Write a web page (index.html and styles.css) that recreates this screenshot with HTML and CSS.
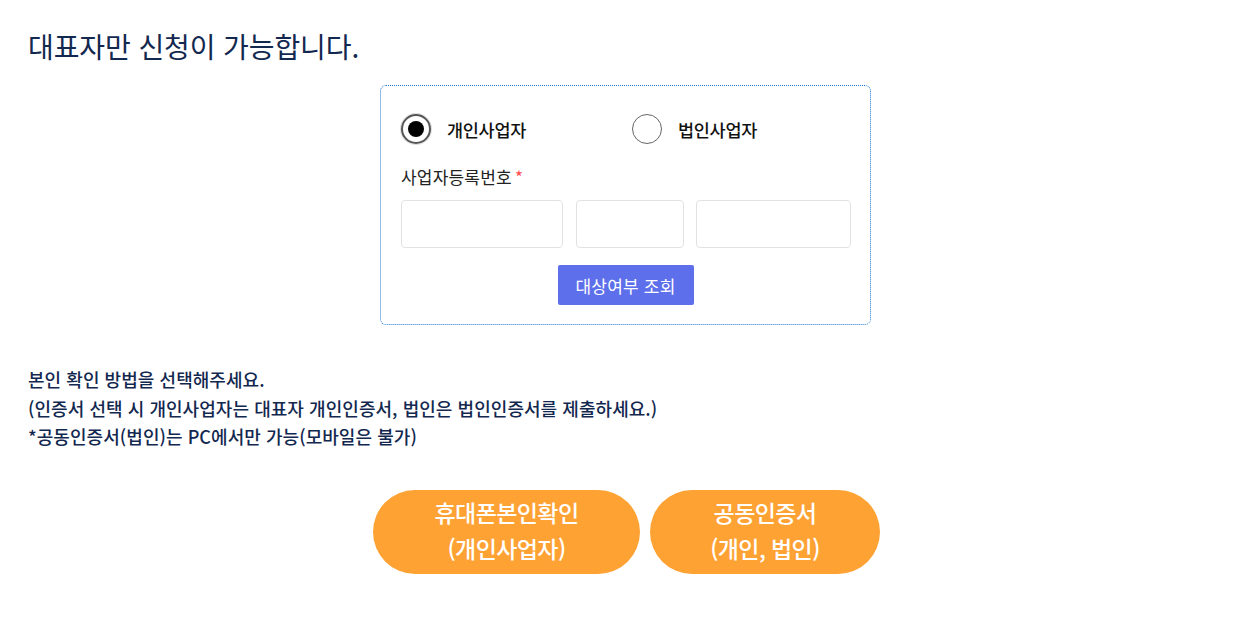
FILE: index.html
```html
<!DOCTYPE html>
<html lang="ko">
<head>
    <meta charset="UTF-8">
    <meta name="viewport" content="width=device-width, initial-scale=1.0">
    <title>대표자 신청</title>
    <link rel="stylesheet" href="styles.css">
</head>
<body>
    <h1 class="title">대표자만 신청이 가능합니다.</h1>

    <form class="check-box" onsubmit="return false">
        <div class="radio-row">
            <label class="radio-item">
                <input type="radio" name="bizType" value="personal" checked>
                <span class="radio-mark"></span>
                <span class="radio-text">개인사업자</span>
            </label>
            <label class="radio-item">
                <input type="radio" name="bizType" value="corp">
                <span class="radio-mark"></span>
                <span class="radio-text">법인사업자</span>
            </label>
        </div>

        <div class="field-label">사업자등록번호<span class="required">*</span></div>
        <div class="biz-inputs">
            <input type="text" class="biz-no first" maxlength="3">
            <input type="text" class="biz-no second" maxlength="2">
            <input type="text" class="biz-no third" maxlength="5">
        </div>

        <div class="btn-row">
            <button type="button" class="check-btn">대상여부 조회</button>
        </div>
    </form>

    <div class="notice">
        <p>본인 확인 방법을 선택해주세요.</p>
        <p>(인증서 선택 시 개인사업자는 대표자 개인인증서, 법인은 법인인증서를 제출하세요.)</p>
        <p>*공동인증서(법인)는 PC에서만 가능(모바일은 불가)</p>
    </div>

    <div class="auth-buttons">
        <button type="button" class="auth-btn phone">휴대폰본인확인<br>(개인사업자)</button>
        <button type="button" class="auth-btn cert">공동인증서<br>(개인, 법인)</button>
    </div>
</body>
</html>
```

FILE: styles.css
```css
* {
    box-sizing: border-box;
}
body {
    margin: 0;
    padding: 26px 28px 0;
    font-family: "Noto Sans CJK KR", "Noto Sans", sans-serif;
    background: #fff;
    color: #111;
}
.title {
    margin: 0;
    font-size: 28px;
    font-weight: 400;
    color: #13284f;
    letter-spacing: -0.1px;
    line-height: 40px;
}

.check-box {
    width: 491px;
    height: 240px;
    margin: 19px 0 0 352px;
    padding: 28px 20px 0 20px;
    border: 1px dotted #1f78d8;
    border-radius: 6px;
}
.radio-row {
    display: flex;
    align-items: center;
}
.radio-item {
    display: flex;
    align-items: center;
    width: 231px;
    flex-shrink: 0;
    cursor: pointer;
}
.radio-item input {
    display: none;
}
.radio-mark {
    width: 30px;
    height: 30px;
    border: 1px solid #666;
    border-radius: 50%;
    display: flex;
    align-items: center;
    justify-content: center;
    flex-shrink: 0;
}
.radio-item input:checked + .radio-mark {
    border: 2px solid #555;
    box-shadow: 0 0 0 1px #ddd;
}
.radio-item input:checked + .radio-mark::after {
    content: "";
    width: 16px;
    height: 16px;
    border-radius: 50%;
    background: #000;
}
.radio-text {
    margin-left: 16px;
    font-size: 17.5px;
    font-weight: 500;
    letter-spacing: -0.3px;
}

.field-label {
    margin-top: 21px;
    font-size: 17px;
    line-height: 24px;
    color: #222;
    letter-spacing: 0.2px;
}
.required {
    color: #ff4b4b;
    margin-left: 3px;
}
.biz-inputs {
    display: flex;
    margin-top: 11px;
}
.biz-no {
    height: 48px;
    border: 1px solid #e2e2e2;
    border-radius: 4px;
    font-size: 16px;
    padding: 0 10px;
}
.biz-no.first {
    width: 162px;
}
.biz-no.second {
    width: 108px;
    margin-left: 13px;
}
.biz-no.third {
    width: 155px;
    margin-left: 12px;
}
.btn-row {
    display: flex;
    justify-content: center;
    margin-top: 17px;
}
.check-btn {
    width: 136px;
    height: 40px;
    border: none;
    border-radius: 2px;
    background: #5d6fea;
    color: #fff;
    font-family: inherit;
    font-size: 17px;
    letter-spacing: 0.2px;
}

.notice {
    margin-top: 40px;
    color: #13284f;
    font-size: 18px;
    font-weight: 500;
    letter-spacing: 0.05px;
    line-height: 28.5px;
}
.notice p {
    margin: 0;
}

.auth-buttons {
    display: flex;
    gap: 10px;
    margin: 39px 0 0 345px;
}
.auth-btn {
    height: 84px;
    padding: 0 0 3px;
    border: none;
    border-radius: 42px;
    background: #ffa234;
    color: #fff;
    font-family: inherit;
    font-size: 23px;
    font-weight: 500;
    line-height: 36px;
    letter-spacing: -0.6px;
}
.auth-btn.phone {
    width: 267px;
}
.auth-btn.cert {
    width: 230px;
}
```
